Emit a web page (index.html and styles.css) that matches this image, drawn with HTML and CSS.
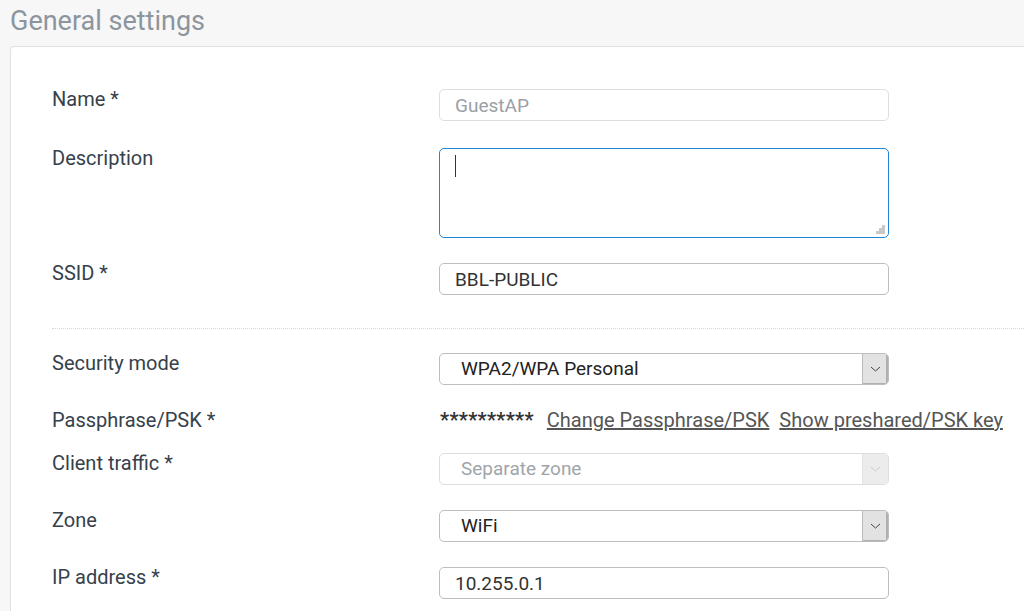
FILE: index.html
```html
<!DOCTYPE html>
<html lang="en">
<head>
  <meta charset="UTF-8" />
  <title>General settings</title>
  <link rel="stylesheet" href="styles.css">
</head>
<body>
  <h2 class="section-title">General settings</h2>
  <div class="panel">
    <div class="row row-name">
      <label class="label">Name *</label>
      <input class="field readonly" type="text" value="GuestAP" readonly />
    </div>
    <div class="row">
      <label class="label">Description</label>
      <div class="textarea focused"><span class="caret"></span><span class="grip"></span></div>
    </div>
    <div class="row">
      <label class="label">SSID *</label>
      <input class="field" type="text" value="BBL-PUBLIC" />
    </div>

    <hr class="divider" />

    <div class="row">
      <label class="label">Security mode</label>
      <div class="select"><span class="select-text">WPA2/WPA Personal</span><span class="select-btn"><svg width="11" height="6" viewBox="0 0 11 6"><path d="M1 1 L5.5 5 L10 1" fill="none" stroke="#444" stroke-width="1"/></svg></span></div>
    </div>
    <div class="row row-psk">
      <label class="label">Passphrase/PSK *</label>
      <div class="psk">
        <span class="stars">**********</span>
        <a href="#" class="link">Change Passphrase/PSK</a>
        <a href="#" class="link">Show preshared/PSK key</a>
      </div>
    </div>
    <div class="row">
      <label class="label">Client traffic *</label>
      <div class="select disabled"><span class="select-text">Separate zone</span><span class="select-btn"><svg width="11" height="6" viewBox="0 0 11 6"><path d="M1 1 L5.5 5 L10 1" fill="none" stroke="#c8c8c8" stroke-width="1"/></svg></span></div>
    </div>
    <div class="row">
      <label class="label">Zone</label>
      <div class="select"><span class="select-text">WiFi</span><span class="select-btn"><svg width="11" height="6" viewBox="0 0 11 6"><path d="M1 1 L5.5 5 L10 1" fill="none" stroke="#444" stroke-width="1"/></svg></span></div>
    </div>
    <div class="row">
      <label class="label">IP address *</label>
      <input class="field" type="text" value="10.255.0.1" />
    </div>
  </div>
</body>
</html>
```

FILE: styles.css
```css
body {
  margin: 0;
  background: #f7f7f7;
  font-family: Roboto, "Liberation Sans", sans-serif;
  overflow: hidden;
}

.section-title {
  margin: 0;
  padding: 5px 0 0 10px;
  height: 46px;
  box-sizing: border-box;
  font-size: 27px;
  font-weight: 400;
  color: #8c959e;
  line-height: 32px;
}

.panel {
  margin-left: 10px;
  background: #fff;
  border: 1px solid #e0e0e0;
  border-right: none;
  border-radius: 4px 0 0 0;
  padding: 42px 0 20px 41px;
  height: 700px;
}

.row {
  display: flex;
  align-items: flex-start;
  margin-bottom: 25px;
}

.row-name {
  margin-bottom: 27px;
}

.row-psk {
  margin-bottom: 23px;
}

.label {
  width: 387px;
  flex-shrink: 0;
  font-size: 20px;
  line-height: 20px;
  color: #36414b;
}

.field {
  width: 450px;
  height: 32px;
  box-sizing: border-box;
  border: 1px solid #bdbdbd;
  border-radius: 5px;
  padding: 0 15px;
  font-family: inherit;
  font-size: 19px;
  color: #333;
  background: #fff;
  outline: none;
}

.field.readonly {
  border-color: #dedede;
  color: #9aa0a6;
}

.textarea {
  position: relative;
  width: 450px;
  height: 90px;
  box-sizing: border-box;
  border: 1px solid #1e88d6;
  border-radius: 5px;
}

.caret {
  position: absolute;
  left: 15px;
  top: 6px;
  width: 1px;
  height: 22px;
  background: #333;
}

.grip {
  position: absolute;
  right: 3px;
  bottom: 3px;
  width: 9px;
  height: 9px;
  background:
    linear-gradient(#bbb, #bbb) 6px 0 / 3px 3px no-repeat,
    linear-gradient(#bbb, #bbb) 3px 3px / 6px 3px no-repeat,
    linear-gradient(#bbb, #bbb) 0 6px / 9px 3px no-repeat;
  opacity: 0.8;
}

.divider {
  border: none;
  border-top: 1px dotted #d8d8d8;
  margin: 33px 0 24px 0;
}

.select {
  display: flex;
  width: 450px;
  height: 32px;
  box-sizing: border-box;
  border: 1px solid #bdbdbd;
  border-radius: 5px;
  overflow: hidden;
  background: #fff;
}

.select-text {
  flex: 1;
  padding-left: 21px;
  font-size: 19px;
  line-height: 30px;
  color: #222;
}

.select-btn {
  width: 25px;
  background: #e2e2e2;
  border-left: 1px solid #bdbdbd;
  box-shadow: inset -2px -1px 0 #b0b0b0;
  display: flex;
  align-items: center;
  justify-content: center;
}

.select.disabled {
  border-color: #dedede;
}

.select.disabled .select-text {
  color: #a0a5aa;
}

.select.disabled .select-btn {
  background: #ececec;
  border-left-color: #e4e4e4;
  box-shadow: none;
}

.psk {
  display: flex;
  gap: 10px;
  font-size: 20px;
  line-height: 20px;
  padding-left: 1px;
}

.stars {
  color: #333;
  font-size: 20px;
  font-weight: 700;
  letter-spacing: 0.3px;
  margin-right: 3px;
}

.link {
  color: #555;
  text-decoration: underline;
}
```
